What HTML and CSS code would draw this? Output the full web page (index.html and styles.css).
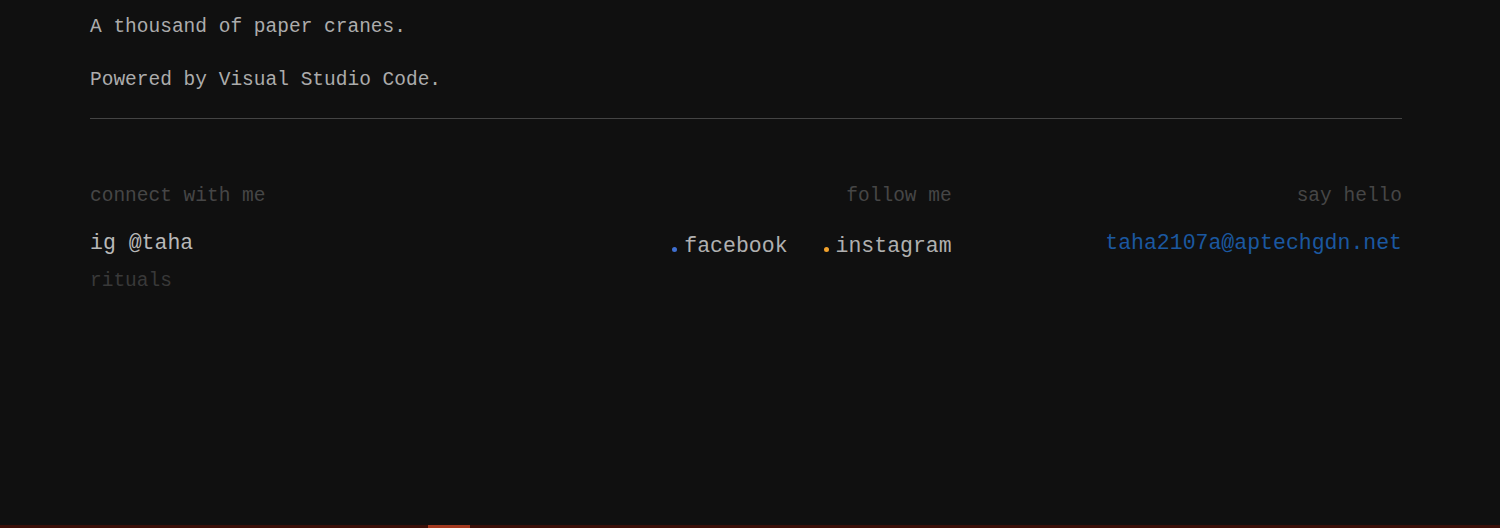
FILE: index.html
```html
<!DOCTYPE html>
<html lang="en">
<head>
<meta charset="utf-8">
<title>A thousand of paper cranes</title>
<link rel="stylesheet" href="styles.css">
</head>
<body>
<main class="page">
  <p class="line">A thousand of paper cranes.</p>
  <p class="line line-second">Powered by Visual Studio Code.</p>
  <hr class="rule">
  <footer class="footer">
    <section class="col col-left">
      <h3 class="col-title">connect with me</h3>
      <div class="handle">ig @taha</div>
      <div class="sub">rituals</div>
    </section>
    <section class="col col-mid">
      <h3 class="col-title">follow me</h3>
      <div class="socials">
        <a class="social"><span class="dot dot-blue"></span>facebook</a>
        <a class="social"><span class="dot dot-orange"></span>instagram</a>
      </div>
    </section>
    <section class="col col-right">
      <h3 class="col-title">say hello</h3>
      <a class="mail">taha2107a@aptechgdn.net</a>
    </section>
  </footer>
</main>
<div class="bottom-bar"><span class="bar-mark"></span></div>
</body>
</html>
```
FILE: styles.css
```css
html, body {
  margin: 0;
  padding: 0;
  background: #101010;
  height: 100%;
  overflow: hidden;
}
body {
  font-family: "Liberation Mono", "DejaVu Sans Mono", monospace;
  color: #b0b0b0;
}
.page {
  width: 1312px;
  padding: 14px 0 0 90px;
}
.line {
  margin: 0;
  font-size: 19.5px;
  line-height: 26px;
  color: #acacac;
}
.line-second {
  margin-top: 27px;
}
.rule {
  margin: 25px 0 0 0;
  border: 0;
  height: 1px;
  background: #444444;
}
.footer {
  display: grid;
  grid-template-columns: 1fr 1fr 1fr;
  margin-top: 64px;
}
.col-title {
  margin: 0;
  font-weight: normal;
  font-size: 19.5px;
  line-height: 26px;
  color: #464646;
}
.col-mid {
  text-align: right;
  padding-right: 13px;
}
.col-right {
  text-align: right;
}
.handle {
  margin-top: 20px;
  font-size: 21.5px;
  line-height: 28px;
  color: #b8b8b8;
}
.sub {
  margin-top: 11px;
  font-size: 19.5px;
  line-height: 26px;
  color: #393939;
}
.socials {
  display: flex;
  justify-content: flex-end;
  gap: 36px;
  margin-top: 23px;
}
.social {
  display: flex;
  align-items: baseline;
  font-size: 21.5px;
  line-height: 28px;
  color: #b0b0b0;
}
.dot {
  width: 5px;
  height: 5px;
  border-radius: 50%;
  margin-right: 7px;
}
.dot-blue { background: #3f6fd0; }
.dot-orange { background: #f2a22c; }
.mail {
  display: block;
  margin-top: 20px;
  font-size: 21.5px;
  line-height: 28px;
  color: #1b58a0;
}
.bottom-bar {
  position: fixed;
  left: 0;
  right: 0;
  bottom: 0;
  height: 3px;
  background: #3a0f08;
}
.bar-mark {
  position: absolute;
  left: 428px;
  top: 0;
  width: 42px;
  height: 3px;
  background: #a3391f;
}
```
